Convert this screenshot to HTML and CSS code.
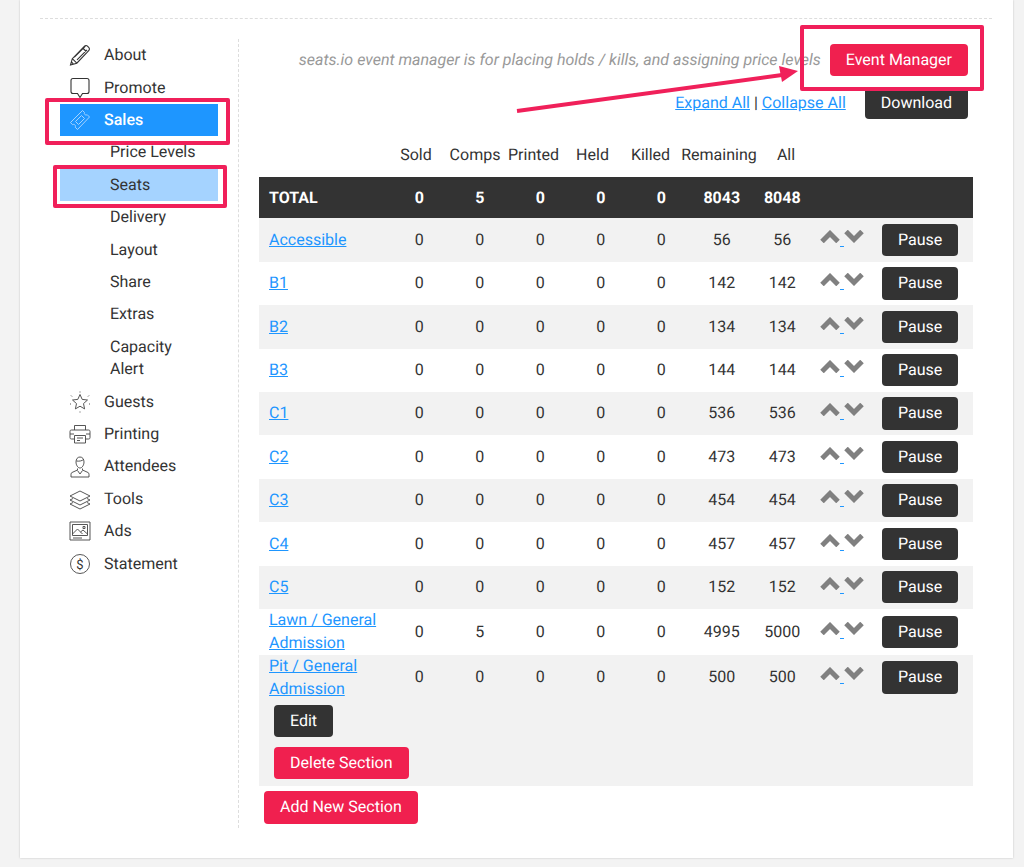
FILE: index.html
```html
<!DOCTYPE html>
<html lang="en">
<head>
<meta charset="utf-8">
<title>Seats</title>
<link rel="stylesheet" href="styles.css">
</head>
<body>
<div class="card">
  <div class="layout">
    <nav class="side">
      <a class="item"><svg class="ico" viewBox="0 0 22 22"><path d="M1.500 21l1.800-6.300L15.300 2.300c1-1 2.400-1 3.400 0l1 1c1 1 1 2.400 0 3.400L7.800 19.200zM3.300 14.700l4.500 4.500M13.700 4l4.500 4.500M5.400 13l11-11M8 15.800l10-10M2.500 18l1.700 1.800"/></svg><span>About</span></a>
      <a class="item"><svg class="ico" viewBox="0 0 22 22"><path d="M4 1.500h14c1.300 0 2 .7 2 2v11c0 1.300-.7 2-2 2h-4.500L11 20.500 8.500 16.500H4c-1.300 0-2-.7-2-2v-11c0-1.300.7-2 2-2z"/></svg><span>Promote</span></a>
      <a class="item active"><svg class="ico light" viewBox="0 0 22 22"><path d="M1.500 13.500L13.500 1.500l2 2c-.6 1.200.2 2.200 1 2.400.6.200 1.200.1 1.700-.2l2.300 2.300L8.500 20.500l-2.300-2.300c.4-.8.3-1.700-.3-2.300-.7-.6-1.500-.7-2.400-.2zM6.500 12.500l6-6 3 3-6 6z"/></svg><span>Sales</span></a>
      <a class="sub">Price Levels</a>
      <a class="sub current">Seats</a>
      <a class="sub">Delivery</a>
      <a class="sub">Layout</a>
      <a class="sub">Share</a>
      <a class="sub">Extras</a>
      <a class="sub">Capacity Alert</a>
      <a class="item"><svg class="ico thin" viewBox="0 0 22 22"><path d="M11 3.500l2.200 4.900 5.300.6-4 3.600 1.100 5.300-4.600-2.700-4.600 2.700 1.100-5.300-4-3.600 5.300-.6zM2 4.500l1 1M20 4.500l-1 1M1 13h1M20 13h1M11 20.500v1M11 .5v1"/></svg><span>Guests</span></a>
      <a class="item"><svg class="ico thin" viewBox="0 0 22 22"><path d="M5.500 7V2.500h11V7M5.500 16H2.500C1.500 16 1 15.500 1 14.500v-6C1 7.500 1.500 7 2.500 7h17c1 0 1.500.5 1.500 1.500v6c0 1-.5 1.500-1.500 1.500h-3M5.500 12.500h11V20h-11zM8 15h6M8 17.500h3M1 11h4M17 11h4"/></svg><span>Printing</span></a>
      <a class="item"><svg class="ico thin" viewBox="0 0 22 22"><path d="M7 6c0-3 1.500-5 4-5s4 2 4 5-1.800 6-4 6-4-3-4-6zM7.500 5c2.500.4 5.500 0 7-1.500M8.500 12.500v1.500L3 16.500c-.8.4-1 1-1 1.800V21h18v-2.700c0-.8-.2-1.400-1-1.800L13.500 14v-1.500M8.500 14.500L11 18l2.500-3.500"/></svg><span>Attendees</span></a>
      <a class="item"><svg class="ico thin" viewBox="0 0 22 22"><path d="M11 3l10 5-10 5L1 8zM4 10.500L1 12l10 5 10-5-3-1.500M4 14.500L1 16l10 5 10-5-3-1.500"/></svg><span>Tools</span></a>
      <a class="item"><svg class="ico thin" viewBox="0 0 22 22"><path d="M1 2h20v18H1zM3.500 4.500h15v11h-15zM3.500 14l5-5 5 5M11.500 12l2.500-2 4.500 4M14 6.500h2v2h-2zM4 18h9"/></svg><span>Ads</span></a>
      <a class="item"><svg class="ico thin" viewBox="0 0 22 22"><circle cx="11" cy="11" r="9.500"/><text class="dollar" x="11" y="15.500">$</text></svg><span>Statement</span></a>
    </nav>

    <main class="main">
      <div class="top-row">
        <em class="note">seats.io event manager is for placing holds / kills, and assigning price levels</em>
        <a class="btn red">Event Manager</a>
      </div>
      <div class="link-row">
        <span class="links"><a class="link">Expand All</a> | <a class="link">Collapse All</a></span>
        <a class="btn dark">Download</a>
      </div>
      <div class="heads">
        <span>Sold</span><span>Comps</span><span>Printed</span><span>Held</span><span>Killed</span><span>Remaining</span><span>All</span>
      </div>
      <table class="grid">
        <colgroup><col class="c-name"><col class="c-n"><col class="c-n"><col class="c-n"><col class="c-n"><col class="c-n"><col class="c-n"><col class="c-n"><col class="c-a"><col></colgroup>
        <tbody>
          <tr class="total"><td class="name">TOTAL</td><td>0</td><td>5</td><td>0</td><td>0</td><td>0</td><td>8043</td><td>8048</td><td></td><td></td></tr>
          <tr><td class="name"><a class="link">Accessible</a></td><td>0</td><td>0</td><td>0</td><td>0</td><td>0</td><td>56</td><td>56</td><td class="ar"><a class="ud"><svg class="chev" viewBox="0 0 20 13"><path d="M2 11.500l8-8 8 8"/></svg> <svg class="chev" viewBox="0 0 20 13"><path d="M2 1.500l8 8 8-8"/></svg></a></td><td class="act"><a class="btn dark">Pause</a></td></tr>
          <tr><td class="name"><a class="link">B1</a></td><td>0</td><td>0</td><td>0</td><td>0</td><td>0</td><td>142</td><td>142</td><td class="ar"><a class="ud"><svg class="chev" viewBox="0 0 20 13"><path d="M2 11.500l8-8 8 8"/></svg> <svg class="chev" viewBox="0 0 20 13"><path d="M2 1.500l8 8 8-8"/></svg></a></td><td class="act"><a class="btn dark">Pause</a></td></tr>
          <tr><td class="name"><a class="link">B2</a></td><td>0</td><td>0</td><td>0</td><td>0</td><td>0</td><td>134</td><td>134</td><td class="ar"><a class="ud"><svg class="chev" viewBox="0 0 20 13"><path d="M2 11.500l8-8 8 8"/></svg> <svg class="chev" viewBox="0 0 20 13"><path d="M2 1.500l8 8 8-8"/></svg></a></td><td class="act"><a class="btn dark">Pause</a></td></tr>
          <tr><td class="name"><a class="link">B3</a></td><td>0</td><td>0</td><td>0</td><td>0</td><td>0</td><td>144</td><td>144</td><td class="ar"><a class="ud"><svg class="chev" viewBox="0 0 20 13"><path d="M2 11.500l8-8 8 8"/></svg> <svg class="chev" viewBox="0 0 20 13"><path d="M2 1.500l8 8 8-8"/></svg></a></td><td class="act"><a class="btn dark">Pause</a></td></tr>
          <tr><td class="name"><a class="link">C1</a></td><td>0</td><td>0</td><td>0</td><td>0</td><td>0</td><td>536</td><td>536</td><td class="ar"><a class="ud"><svg class="chev" viewBox="0 0 20 13"><path d="M2 11.500l8-8 8 8"/></svg> <svg class="chev" viewBox="0 0 20 13"><path d="M2 1.500l8 8 8-8"/></svg></a></td><td class="act"><a class="btn dark">Pause</a></td></tr>
          <tr><td class="name"><a class="link">C2</a></td><td>0</td><td>0</td><td>0</td><td>0</td><td>0</td><td>473</td><td>473</td><td class="ar"><a class="ud"><svg class="chev" viewBox="0 0 20 13"><path d="M2 11.500l8-8 8 8"/></svg> <svg class="chev" viewBox="0 0 20 13"><path d="M2 1.500l8 8 8-8"/></svg></a></td><td class="act"><a class="btn dark">Pause</a></td></tr>
          <tr><td class="name"><a class="link">C3</a></td><td>0</td><td>0</td><td>0</td><td>0</td><td>0</td><td>454</td><td>454</td><td class="ar"><a class="ud"><svg class="chev" viewBox="0 0 20 13"><path d="M2 11.500l8-8 8 8"/></svg> <svg class="chev" viewBox="0 0 20 13"><path d="M2 1.500l8 8 8-8"/></svg></a></td><td class="act"><a class="btn dark">Pause</a></td></tr>
          <tr><td class="name"><a class="link">C4</a></td><td>0</td><td>0</td><td>0</td><td>0</td><td>0</td><td>457</td><td>457</td><td class="ar"><a class="ud"><svg class="chev" viewBox="0 0 20 13"><path d="M2 11.500l8-8 8 8"/></svg> <svg class="chev" viewBox="0 0 20 13"><path d="M2 1.500l8 8 8-8"/></svg></a></td><td class="act"><a class="btn dark">Pause</a></td></tr>
          <tr><td class="name"><a class="link">C5</a></td><td>0</td><td>0</td><td>0</td><td>0</td><td>0</td><td>152</td><td>152</td><td class="ar"><a class="ud"><svg class="chev" viewBox="0 0 20 13"><path d="M2 11.500l8-8 8 8"/></svg> <svg class="chev" viewBox="0 0 20 13"><path d="M2 1.500l8 8 8-8"/></svg></a></td><td class="act"><a class="btn dark">Pause</a></td></tr>
          <tr><td class="name"><a class="link">Lawn / General Admission</a></td><td>0</td><td>5</td><td>0</td><td>0</td><td>0</td><td>4995</td><td>5000</td><td class="ar"><a class="ud"><svg class="chev" viewBox="0 0 20 13"><path d="M2 11.500l8-8 8 8"/></svg> <svg class="chev" viewBox="0 0 20 13"><path d="M2 1.500l8 8 8-8"/></svg></a></td><td class="act"><a class="btn dark">Pause</a></td></tr>
          <tr><td class="name"><a class="link">Pit / General Admission</a></td><td>0</td><td>0</td><td>0</td><td>0</td><td>0</td><td>500</td><td>500</td><td class="ar"><a class="ud"><svg class="chev" viewBox="0 0 20 13"><path d="M2 11.500l8-8 8 8"/></svg> <svg class="chev" viewBox="0 0 20 13"><path d="M2 1.500l8 8 8-8"/></svg></a></td><td class="act"><a class="btn dark">Pause</a></td></tr>
          <tr class="tools"><td colspan="10"><a class="btn dark">Edit</a><a class="btn red">Delete Section</a></td></tr>
        </tbody>
      </table>
      <a class="btn red add">Add New Section</a>
    </main>
  </div>
</div>

<div class="mark mark-sales"></div>
<div class="mark mark-seats"></div>
<div class="mark mark-event"></div>
<svg class="pointer" viewBox="0 0 300 60"><path d="M1 44L266 8"/><polygon points="282,4 263,-1 266,15"/></svg>
</body>
</html>
```
FILE: styles.css
```css
* { box-sizing: border-box; }
html, body { margin: 0; height: 867px; overflow: hidden; }
body {
  background: #f3f3f3;
  color: #333;
  font: 16px/22.4px Roboto, "Liberation Sans", sans-serif;
  text-rendering: geometricPrecision;
  position: relative;
}
a { color: inherit; text-decoration: none; }

.card {
  width: 993px;
  height: 858px;
  margin-left: 20px;
  padding: 18px 20px 0;
  background: #fff;
  box-shadow: 0 0 2px rgba(0, 0, 0, .2);
}
.layout {
  display: flex;
  border-top: 1px dashed #ddd;
  padding: 20px 0 0 20px;
  width: 952px;
}

/* sidebar */
.side { width: 178px; padding: .2px 20px 0 0; flex: none; }
.item, .sub { display: block; padding: 5px 0; }
.item { display: flex; align-items: center; padding-left: 9px; }
.item span { margin-left: 13px; }
.sub { padding: 5px 20px 5px 50px; }
.active { background: #1e96ff; color: #fff; font-weight: 500; }
.current { background: #a5d3ff; }
.ico { width: 22px; height: 22px; flex: none; fill: none; stroke: #333; stroke-width: 1.1; }
.ico.light { stroke: #a5d3ff; stroke-width: 1; }
.ico.thin { stroke: #444; stroke-width: .9; }
.dollar { font: 400 13px Roboto, sans-serif; fill: #333; stroke: none; text-anchor: middle; }

/* main */
.main {
  width: 735px;
  height: 789px;
  padding-left: 20px;
  border-left: 1px dashed #ddd;
  flex: none;
}
.top-row {
  display: flex;
  justify-content: flex-end;
  align-items: center;
  gap: 9px;
  margin-top: 5px;
  padding-right: 5px;
}
.note { color: #999; }
.link-row {
  display: flex;
  justify-content: flex-end;
  gap: 19px;
  align-items: center;
  margin-top: 10.4px;
  padding-right: 5px;
}
.link { color: #1e96ff; text-decoration: underline; }
.btn {
  display: inline-block;
  padding: 5px 16px;
  border-radius: 4px;
  color: #fff;
  font-weight: 400;
  white-space: nowrap;
}
.red { background: #f0204f; }
.dark { background: #333; }

.heads {
  display: grid;
  grid-template-columns: 60px 58px 59px 59px 57px 80px 54px;
  margin: 24.4px 0 0 127px;
  text-align: center;
  height: 33.2px;
}

.grid { width: 714px; table-layout: fixed; border-collapse: collapse; }
.c-name { width: 130px; }
.c-n { width: 60.5px; }
.c-a { width: 61px; }
.grid td { padding: 5.5px 0; text-align: center; vertical-align: middle; }
.grid td.name { padding: .5px 10px; text-align: left; }
.grid tr:nth-child(even) { background: #f2f2f2; }
.total { background: #333; color: #fff; font-weight: 700; }
.grid .total td { height: 41.5px; padding: 1px 0 0; }
.grid .total td.name { padding: 1px 10px 0; }
.grid td.ar { text-align: left; padding-left: 7.5px; white-space: nowrap; }
.ud { color: #1e96ff; text-decoration: underline; }
.chev { width: 20px; height: 13px; vertical-align: 2px; fill: none; stroke: #808080; stroke-width: 5; }
.grid td.act { text-align: left; padding-left: 8.5px; }
.grid tr.tools { background: #f2f2f2; }
.grid .tools td { text-align: left; padding: 4px 0 7px 15px; }
.tools .btn { display: block; width: fit-content; }
.tools .btn + .btn { margin-top: 10px; }
.add { margin: 5px 0 0 5px; }

/* screenshot annotations */
.mark { position: absolute; border: 4px solid #f0205a; border-radius: 2px; }
.mark-sales { left: 45px; top: 98px; width: 185px; height: 47px; }
.mark-seats { left: 53px; top: 165px; width: 174px; height: 43px; }
.mark-event { left: 800px; top: 25px; width: 184px; height: 66px; }
.pointer { position: absolute; left: 516px; top: 67px; width: 300px; height: 60px; overflow: visible; fill: #f0205a; stroke: #f0205a; }
.pointer path { stroke-width: 4; fill: none; }
.pointer polygon { stroke: none; }
```
